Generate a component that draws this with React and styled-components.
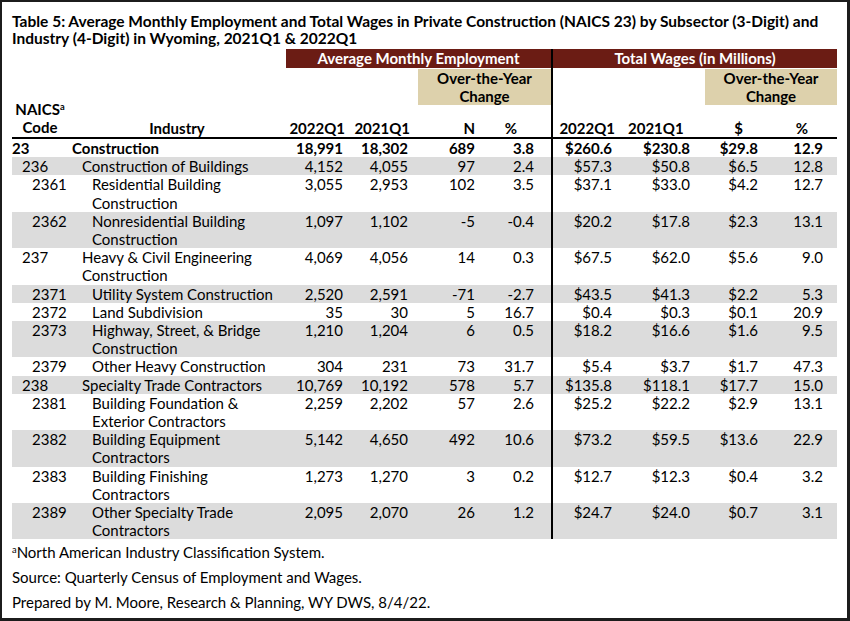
import React from 'react';
import styled, { createGlobalStyle } from 'styled-components';

const COLS = '56px 218px 64px 68px 67px 66px 77px 77px 66px 66px';
const VALUE_PAD = [7, 10, 10, 17, 16, 15, 13, 14];
const HEAD_PAD = [5, 8, 10, 34, 13, 25, 28, 29];

const rows = [
  { code: '23', name: ['Construction'], level: 0, bold: true, v: ['18,991', '18,302', '689', '3.8', '$260.6', '$230.8', '$29.8', '12.9'] },
  { code: '236', name: ['Construction of Buildings'], level: 1, v: ['4,152', '4,055', '97', '2.4', '$57.3', '$50.8', '$6.5', '12.8'] },
  { code: '2361', name: ['Residential Building', 'Construction'], level: 2, v: ['3,055', '2,953', '102', '3.5', '$37.1', '$33.0', '$4.2', '12.7'] },
  { code: '2362', name: ['Nonresidential Building', 'Construction'], level: 2, v: ['1,097', '1,102', '-5', '-0.4', '$20.2', '$17.8', '$2.3', '13.1'] },
  { code: '237', name: ['Heavy & Civil Engineering', 'Construction'], level: 1, v: ['4,069', '4,056', '14', '0.3', '$67.5', '$62.0', '$5.6', '9.0'] },
  { code: '2371', name: ['Utility System Construction'], level: 2, v: ['2,520', '2,591', '-71', '-2.7', '$43.5', '$41.3', '$2.2', '5.3'] },
  { code: '2372', name: ['Land Subdivision'], level: 2, v: ['35', '30', '5', '16.7', '$0.4', '$0.3', '$0.1', '20.9'] },
  { code: '2373', name: ['Highway, Street, & Bridge', 'Construction'], level: 2, v: ['1,210', '1,204', '6', '0.5', '$18.2', '$16.6', '$1.6', '9.5'] },
  { code: '2379', name: ['Other Heavy Construction'], level: 2, v: ['304', '231', '73', '31.7', '$5.4', '$3.7', '$1.7', '47.3'] },
  { code: '238', name: ['Specialty Trade Contractors'], level: 1, v: ['10,769', '10,192', '578', '5.7', '$135.8', '$118.1', '$17.7', '15.0'] },
  { code: '2381', name: ['Building Foundation &', 'Exterior Contractors'], level: 2, v: ['2,259', '2,202', '57', '2.6', '$25.2', '$22.2', '$2.9', '13.1'] },
  { code: '2382', name: ['Building Equipment', 'Contractors'], level: 2, v: ['5,142', '4,650', '492', '10.6', '$73.2', '$59.5', '$13.6', '22.9'] },
  { code: '2383', name: ['Building Finishing', 'Contractors'], level: 2, v: ['1,273', '1,270', '3', '0.2', '$12.7', '$12.3', '$0.4', '3.2'] },
  { code: '2389', name: ['Other Specialty Trade', 'Contractors'], level: 2, v: ['2,095', '2,070', '26', '1.2', '$24.7', '$24.0', '$0.7', '3.1'] },
];

const heads = ['2022Q1', '2021Q1', 'N', '%', '2022Q1', '2021Q1', '$', '%'];

const GlobalStyle = createGlobalStyle`
  body {
    margin: 0;
    background: #fff;
    font-family: Lato, 'Liberation Sans', sans-serif;
    color: #000;
  }
`;

const Frame = styled.div`
  width: 850px;
  height: 621px;
  box-sizing: border-box;
  border: 2px solid #1c1c1c;
  border-right-width: 3px;
  border-bottom-width: 3px;
  padding: 11px 0 0 10px;
`;

const Title = styled.h1`
  margin: 0 0 3px;
  font-size: 15.5px;
  line-height: 16.5px;
  font-weight: 700;
  width: 830px;
`;

const Grid = styled.div`
  display: grid;
  grid-template-columns: ${COLS};
  width: 825px;
`;

const BandRow = styled(Grid)`
  height: 19px;
`;

const Band = styled.div`
  grid-column: ${p => p.$span};
  background: #6b1c14;
  color: #fff;
  font-weight: 700;
  font-size: 15px;
  line-height: 19px;
  text-align: center;
  border-left: ${p => (p.$divider ? '2px solid #000' : 'none')};
`;

const TanRow = styled(Grid)`
  height: 37px;
`;

const Tan = styled.div`
  grid-column: ${p => p.$span};
  margin-top: 1px;
  background: #ddd1ac;
  font-weight: 700;
  font-size: 15px;
  line-height: 18px;
  text-align: center;
`;

const Divider = styled.div`
  grid-column: ${p => p.$span};
  border-left: 2px solid #000;
`;

const HeadRow = styled(Grid)`
  grid-template-rows: 32px;
  border-bottom: 2px solid #000;
  font-weight: 700;
  font-size: 15px;
  line-height: 16px;
`;

const HeadLabel = styled.div`
  min-height: 0;
  text-align: ${p => p.$align || 'right'};
  padding-right: ${p => p.$pad || 0}px;
  padding-bottom: 1px;
  display: flex;
  flex-direction: column;
  justify-content: flex-end;
  line-height: ${p => p.$lh || 16}px;
  border-left: ${p => (p.$divider ? '2px solid #000' : 'none')};
`;

const Sup = styled.sup`
  font-size: 0.62em;
  line-height: 0;
  vertical-align: 0.55em;
`;

const DataRow = styled(Grid)`
  background: ${p => (p.$shade ? '#dcdcdc' : 'transparent')};
  font-size: 15px;
  line-height: 18.2px;
  font-weight: ${p => (p.$bold ? 700 : 400)};
`;

const CodeCell = styled.div`
  padding-left: ${p => p.$level * 10}px;
`;

const NameCell = styled.div`
  padding-left: ${p => 4 + p.$level * 10}px;
`;

const NumCell = styled.div`
  text-align: right;
  padding-right: ${p => p.$pad}px;
  border-left: ${p => (p.$divider ? '2px solid #000' : 'none')};
`;

const Notes = styled.div`
  padding-top: 1px;
  font-size: 15px;
  line-height: 25px;
`;

export default function App() {
  return (
    <>
      <GlobalStyle />
      <Frame>
        <Title>
          Table 5: Average Monthly Employment and Total Wages in Private Construction (NAICS 23) by Subsector (3-Digit) and
          Industry (4-Digit) in Wyoming, 2021Q1 &amp; 2022Q1
        </Title>
        <BandRow>
          <Band $span="3 / 7">Average Monthly Employment</Band>
          <Band $span="7 / 11" $divider>Total Wages (in Millions)</Band>
        </BandRow>
        <TanRow>
          <Tan $span="5 / 7">Over-the-Year<br />Change</Tan>
          <Divider $span="7 / 9" />
          <Tan $span="9 / 11">Over-the-Year<br />Change</Tan>
        </TanRow>
        <HeadRow>
          <HeadLabel $align="center" $lh={18}>
            <span>NAICS<Sup>a</Sup></span>
            <span>Code</span>
          </HeadLabel>
          <HeadLabel $align="center">Industry</HeadLabel>
          {heads.map((h, i) => (
            <HeadLabel key={i} $pad={HEAD_PAD[i]} $divider={i === 4}>{h}</HeadLabel>
          ))}
        </HeadRow>
        {rows.map((r, idx) => (
          <DataRow key={r.code} $shade={idx % 2 === 1} $bold={r.bold}>
            <CodeCell $level={r.level}>{r.code}</CodeCell>
            <NameCell $level={r.level}>
              {r.name.map((line, j) => (
                <div key={j}>{line}</div>
              ))}
            </NameCell>
            {r.v.map((val, i) => (
              <NumCell key={i} $pad={VALUE_PAD[i]} $divider={i === 4}>{val}</NumCell>
            ))}
          </DataRow>
        ))}
        <Notes>
          <div><Sup>a</Sup>North American Industry Classification System.</div>
          <div>Source: Quarterly Census of Employment and Wages.</div>
          <div>Prepared by M. Moore, Research &amp; Planning, WY DWS, 8/4/22.</div>
        </Notes>
      </Frame>
    </>
  );
}
